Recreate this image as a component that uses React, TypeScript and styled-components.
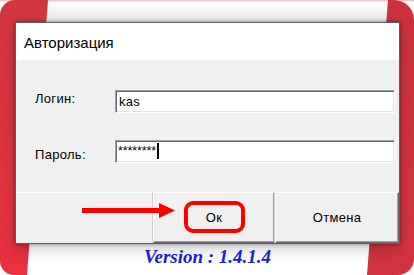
import React from 'react';
import styled, {createGlobalStyle} from "styled-components";

const GlobalStyle = createGlobalStyle`
  html, body {
    margin: 0;
    padding: 0;
    background: #ffffff;
  }
`

export default function App() {
    return (
        <Stage>
            <GlobalStyle/>
            <Dialog>
                <TitleBar>Авторизация</TitleBar>
                <FormBody>
                    <Label shift={1}>Логин:</Label>
                    <Field>kas</Field>
                    <Label shift={7}>Пароль:</Label>
                    <Field password>
                        ********
                        <Caret/>
                    </Field>
                </FormBody>
                <ButtonRow>
                    <Spacer/>
                    <DialogButton>
                        <Highlight>Ок</Highlight>
                    </DialogButton>
                    <DialogButton>Отмена</DialogButton>
                    <Arrow width="93" height="15" viewBox="0 0 93 15">
                        <rect x="0" y="5" width="80" height="5" fill="#ff0000"/>
                        <polygon points="77,0 93,7.5 77,15" fill="#ff0000"/>
                    </Arrow>
                </ButtonRow>
            </Dialog>
            <Version>Version : 1.4.1.4</Version>
        </Stage>
    );
}

const Stage = styled.div`
  position: relative;
  width: 414px;
  height: 275px;
  overflow: hidden;
  box-sizing: border-box;
  padding: 22px 14px 0 15px;
  background: linear-gradient(to bottom, #f3c7ca 0, #f3c7ca 1px, #ffffff 2px, #e3e3e3 22px, #ffffff 22px);

  &::before {
    content: "";
    position: absolute;
    left: 0;
    top: 0;
    width: 48px;
    height: 275px;
    border-radius: 15px 0 0 14px;
    background: linear-gradient(to bottom, #d2363f, #e8323e);
    clip-path: polygon(0 0, 100% 0, 27px 100%, 0 100%);
  }

  &::after {
    content: "";
    position: absolute;
    right: 0;
    top: 0;
    width: 47px;
    height: 275px;
    border-radius: 0 20px 16px 0;
    background: linear-gradient(to bottom, #c9323c, #d2343f);
    clip-path: polygon(21px 0, 100% 0, 100% 100%, 0 100%);
  }
`

const Dialog = styled.div`
  position: relative;
  z-index: 1;
  width: 385px;
  border: 1px solid #5f5f5f;
  box-sizing: border-box;
  background: #f0f0f0;
  display: flex;
  flex-direction: column;
  box-shadow: 0 0 4px rgba(0, 0, 0, 0.45), 0 8px 12px rgba(0, 0, 0, 0.14);
  font-family: "Liberation Sans", sans-serif;
  font-size: 13px;
  color: #000;
`

const TitleBar = styled.div`
  height: 37px;
  background: #ffffff;
  display: flex;
  align-items: center;
  padding: 1px 0 0 8px;
  box-sizing: border-box;
  font-size: 15px;
`

const FormBody = styled.div`
  height: 132px;
  box-sizing: border-box;
  padding: 30px 4px 0 19px;
  display: grid;
  grid-template-columns: 80px 1fr;
  grid-auto-rows: 23px;
  row-gap: 27px;
`

const Label = styled.div<{ shift: number }>`
  align-self: start;
  line-height: 16px;
  margin-top: ${p => p.shift}px;
  letter-spacing: 0.3px;
`

const Field = styled.div<{ password?: boolean }>`
  height: 23px;
  box-sizing: border-box;
  background: #ffffff;
  border: 1px solid;
  border-color: #a0a0a0 #ffffff #ffffff #a0a0a0;
  box-shadow: inset 1px 1px 0 #696969, inset -1px -1px 0 #e3e3e3;
  display: flex;
  align-items: ${p => p.password ? "flex-start" : "center"};
  padding: ${p => p.password ? "2px 0 0 2px" : "0 0 0 3px"};
  font-size: ${p => p.password ? "12.5px" : "13px"};
  line-height: 16px;
  letter-spacing: ${p => p.password ? "-0.1px" : "0.3px"};
`

const Caret = styled.span`
  display: inline-block;
  width: 2px;
  height: 16px;
  margin-left: 1px;
  background: #000;
`

const ButtonRow = styled.div`
  position: relative;
  height: 51px;
  display: grid;
  grid-template-columns: 137px 122px 124px;
`

const Spacer = styled.div`
  border-top: 1px solid #ffffff;
`

const DialogButton = styled.div`
  box-sizing: border-box;
  display: flex;
  align-items: center;
  justify-content: center;
  border-top: 1px solid #ffffff;
  border-left: 1px solid #ffffff;
  border-right: 1px solid #696969;
  border-bottom: 1px solid #696969;
  box-shadow: inset -1px -1px 0 #a0a0a0, -1px 0 0 #d0d0d0;
  padding-bottom: 1px;
  letter-spacing: 0.3px;
`

const Highlight = styled.span`
  box-sizing: border-box;
  width: 61px;
  height: 32px;
  border: 4px solid #ff0000;
  border-radius: 9px;
  display: flex;
  align-items: center;
  justify-content: center;
`

const Arrow = styled.svg`
  position: absolute;
  left: 66px;
  top: 11px;
`

const Version = styled.div`
  position: relative;
  z-index: 1;
  width: 385px;
  margin-top: 3px;
  text-align: center;
  line-height: 20px;
  font-family: "Liberation Serif", serif;
  font-weight: bold;
  font-style: italic;
  font-size: 19px;
  color: #1a1adf;
`
